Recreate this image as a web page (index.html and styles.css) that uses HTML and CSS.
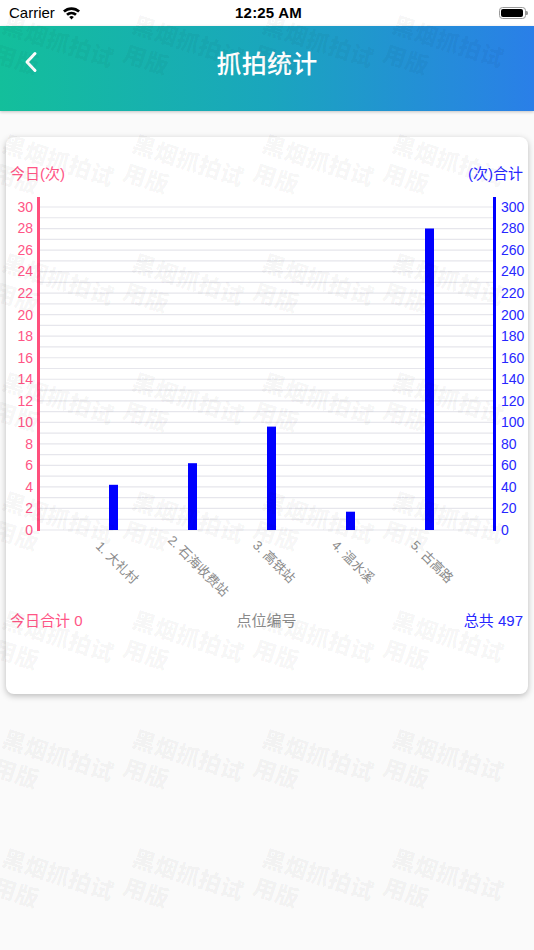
FILE: index.html
```html
<!DOCTYPE html>
<html lang="zh-CN">
<head>
<meta charset="utf-8">
<meta name="viewport" content="width=534">
<title>抓拍统计</title>
<link rel="stylesheet" href="styles.css">
</head>
<body>
<div class="page">
  <div class="statusbar">
    <div class="sb-left">
      <span class="carrier">Carrier</span>
      <svg class="wifi" width="19" height="14" viewBox="0 0 19 14" aria-hidden="true">
        <path d="M1 4.6 A12.5 12.5 0 0 1 18 4.6 L16.2 6.5 A10 10 0 0 0 2.8 6.5 Z" fill="#000"/>
        <path d="M4.1 7.8 A8 8 0 0 1 14.9 7.8 L13.1 9.7 A5.5 5.5 0 0 0 5.9 9.7 Z" fill="#000"/>
        <path d="M7.2 11 A3.4 3.4 0 0 1 11.8 11 L9.5 13.4 Z" fill="#000"/>
      </svg>
    </div>
    <div class="sb-time">12:25 AM</div>
    <div class="sb-right">
      <span class="battery"><span class="battery-level"></span></span>
      <span class="battery-nub"></span>
    </div>
  </div>

  <header class="navbar">
    <button class="back" type="button" aria-label="返回">
      <svg width="16" height="22" viewBox="0 0 16 22" aria-hidden="true">
        <path d="M11 2.5 L3 11 L11 19.5" fill="none" stroke="#fff" stroke-width="3" stroke-linecap="round" stroke-linejoin="round"/>
      </svg>
    </button>
    <h1 class="title">抓拍统计</h1>
    <span class="nav-spacer"></span>
  </header>

  <main class="content">
    <section class="card">
      <div class="axis-titles">
        <span class="axis-title-left">今日(次)</span>
        <span class="axis-title-right">(次)合计</span>
      </div>

      <svg class="chart" width="522" height="420" viewBox="6 184 522 420">
        <path class="grid" d="M40 530H493M40 519.23H493M40 508.47H493M40 497.7H493M40 486.93H493M40 476.17H493M40 465.4H493M40 454.63H493M40 443.87H493M40 433.1H493M40 422.33H493M40 411.57H493M40 400.8H493M40 390.03H493M40 379.27H493M40 368.5H493M40 357.73H493M40 346.97H493M40 336.2H493M40 325.43H493M40 314.67H493M40 303.9H493M40 293.13H493M40 282.37H493M40 271.6H493M40 260.83H493M40 250.07H493M40 239.3H493M40 228.53H493M40 217.77H493M40 207H493"/>
        <line class="axis-left" x1="38.5" y1="197" x2="38.5" y2="531"/>
        <line class="axis-right" x1="494.5" y1="197" x2="494.5" y2="531"/>

        <g class="ylabels-left">
          <text x="33" y="534.8">0</text>
          <text x="33" y="513.3">2</text>
          <text x="33" y="491.7">4</text>
          <text x="33" y="470.2">6</text>
          <text x="33" y="448.7">8</text>
          <text x="33" y="427.1">10</text>
          <text x="33" y="405.6">12</text>
          <text x="33" y="384.1">14</text>
          <text x="33" y="362.5">16</text>
          <text x="33" y="341">18</text>
          <text x="33" y="319.5">20</text>
          <text x="33" y="297.9">22</text>
          <text x="33" y="276.4">24</text>
          <text x="33" y="254.9">26</text>
          <text x="33" y="233.3">28</text>
          <text x="33" y="211.8">30</text>
        </g>
        <g class="ylabels-right">
          <text x="501" y="534.8">0</text>
          <text x="501" y="513.3">20</text>
          <text x="501" y="491.7">40</text>
          <text x="501" y="470.2">60</text>
          <text x="501" y="448.7">80</text>
          <text x="501" y="427.1">100</text>
          <text x="501" y="405.6">120</text>
          <text x="501" y="384.1">140</text>
          <text x="501" y="362.5">160</text>
          <text x="501" y="341">180</text>
          <text x="501" y="319.5">200</text>
          <text x="501" y="297.9">220</text>
          <text x="501" y="276.4">240</text>
          <text x="501" y="254.9">260</text>
          <text x="501" y="233.3">280</text>
          <text x="501" y="211.8">300</text>
        </g>

        <g class="bars">
          <rect x="109" y="484.8" width="9" height="45.2"/>
          <rect x="188" y="463.2" width="9" height="66.8"/>
          <rect x="267" y="426.6" width="9" height="103.4"/>
          <rect x="346" y="511.7" width="9" height="18.3"/>
          <rect x="425" y="228.5" width="9" height="301.5"/>
        </g>

        <g class="xlabels">
          <text x="95" y="547" transform="rotate(45 95 547)">1. 大礼村</text>
          <text x="167" y="541" transform="rotate(45 167 541)">2. 石海收费站</text>
          <text x="252" y="546" transform="rotate(45 252 546)">3. 高铁站</text>
          <text x="331" y="546" transform="rotate(45 331 546)">4. 温水溪</text>
          <text x="410" y="546" transform="rotate(45 410 546)">5. 古高路</text>
        </g>
      </svg>

      <div class="summary">
        <span class="sum-today">今日合计 0</span>
        <span class="sum-axis">点位编号</span>
        <span class="sum-total">总共 497</span>
      </div>
    </section>
  </main>

  <svg class="watermark" width="534" height="950" viewBox="0 0 534 950" aria-hidden="true">
    <g transform="translate(7 13) rotate(18)"><text y="20">黑烟抓拍试</text><text y="50">用版</text></g>
    <g transform="translate(137 13) rotate(18)"><text y="20">黑烟抓拍试</text><text y="50">用版</text></g>
    <g transform="translate(267 13) rotate(18)"><text y="20">黑烟抓拍试</text><text y="50">用版</text></g>
    <g transform="translate(397 13) rotate(18)"><text y="20">黑烟抓拍试</text><text y="50">用版</text></g>

    <g transform="translate(7 132) rotate(18)"><text y="20">黑烟抓拍试</text><text y="50">用版</text></g>
    <g transform="translate(137 132) rotate(18)"><text y="20">黑烟抓拍试</text><text y="50">用版</text></g>
    <g transform="translate(267 132) rotate(18)"><text y="20">黑烟抓拍试</text><text y="50">用版</text></g>
    <g transform="translate(397 132) rotate(18)"><text y="20">黑烟抓拍试</text><text y="50">用版</text></g>

    <g transform="translate(7 251) rotate(18)"><text y="20">黑烟抓拍试</text><text y="50">用版</text></g>
    <g transform="translate(137 251) rotate(18)"><text y="20">黑烟抓拍试</text><text y="50">用版</text></g>
    <g transform="translate(267 251) rotate(18)"><text y="20">黑烟抓拍试</text><text y="50">用版</text></g>
    <g transform="translate(397 251) rotate(18)"><text y="20">黑烟抓拍试</text><text y="50">用版</text></g>

    <g transform="translate(7 370) rotate(18)"><text y="20">黑烟抓拍试</text><text y="50">用版</text></g>
    <g transform="translate(137 370) rotate(18)"><text y="20">黑烟抓拍试</text><text y="50">用版</text></g>
    <g transform="translate(267 370) rotate(18)"><text y="20">黑烟抓拍试</text><text y="50">用版</text></g>
    <g transform="translate(397 370) rotate(18)"><text y="20">黑烟抓拍试</text><text y="50">用版</text></g>

    <g transform="translate(7 489) rotate(18)"><text y="20">黑烟抓拍试</text><text y="50">用版</text></g>
    <g transform="translate(137 489) rotate(18)"><text y="20">黑烟抓拍试</text><text y="50">用版</text></g>
    <g transform="translate(267 489) rotate(18)"><text y="20">黑烟抓拍试</text><text y="50">用版</text></g>
    <g transform="translate(397 489) rotate(18)"><text y="20">黑烟抓拍试</text><text y="50">用版</text></g>

    <g transform="translate(7 608) rotate(18)"><text y="20">黑烟抓拍试</text><text y="50">用版</text></g>
    <g transform="translate(137 608) rotate(18)"><text y="20">黑烟抓拍试</text><text y="50">用版</text></g>
    <g transform="translate(267 608) rotate(18)"><text y="20">黑烟抓拍试</text><text y="50">用版</text></g>
    <g transform="translate(397 608) rotate(18)"><text y="20">黑烟抓拍试</text><text y="50">用版</text></g>

    <g transform="translate(7 727) rotate(18)"><text y="20">黑烟抓拍试</text><text y="50">用版</text></g>
    <g transform="translate(137 727) rotate(18)"><text y="20">黑烟抓拍试</text><text y="50">用版</text></g>
    <g transform="translate(267 727) rotate(18)"><text y="20">黑烟抓拍试</text><text y="50">用版</text></g>
    <g transform="translate(397 727) rotate(18)"><text y="20">黑烟抓拍试</text><text y="50">用版</text></g>

    <g transform="translate(7 846) rotate(18)"><text y="20">黑烟抓拍试</text><text y="50">用版</text></g>
    <g transform="translate(137 846) rotate(18)"><text y="20">黑烟抓拍试</text><text y="50">用版</text></g>
    <g transform="translate(267 846) rotate(18)"><text y="20">黑烟抓拍试</text><text y="50">用版</text></g>
    <g transform="translate(397 846) rotate(18)"><text y="20">黑烟抓拍试</text><text y="50">用版</text></g>
  </svg>
</div>
</body>
</html>
```

FILE: styles.css
```css
* {
  box-sizing: border-box;
}

html, body {
  margin: 0;
  padding: 0;
}

body {
  font-family: "Liberation Sans", "Noto Sans CJK SC", sans-serif;
  background: #fafafa;
}

.page {
  position: relative;
  width: 534px;
  min-height: 950px;
  overflow: hidden;
  background: #fafafa;
}

/* ---------- status bar ---------- */
.statusbar {
  height: 26px;
  background: #fff;
  display: grid;
  grid-template-columns: 1fr auto 1fr;
  align-items: center;
  padding: 0 6px 0 9px;
  color: #000;
}

.sb-left {
  display: flex;
  align-items: center;
  gap: 7px;
}

.carrier {
  font-size: 15px;
  line-height: 18px;
}

.wifi {
  display: block;
  margin-top: -1px;
}

.sb-time {
  font-size: 15px;
  font-weight: 700;
  line-height: 18px;
  letter-spacing: 0.2px;
}

.sb-right {
  display: flex;
  align-items: center;
  justify-content: flex-end;
}

.battery {
  width: 27px;
  height: 12.5px;
  border: 1.2px solid #9a9a9a;
  border-radius: 3.5px;
  padding: 1.3px;
  display: flex;
}

.battery-level {
  flex: 1;
  background: #000;
  border-radius: 2px;
}

.battery-nub {
  width: 2px;
  height: 4.5px;
  background: #9a9a9a;
  border-radius: 0 1.5px 1.5px 0;
  margin-left: 0.5px;
}

/* ---------- nav bar ---------- */
.navbar {
  height: 85px;
  background: linear-gradient(90deg, #13bf9b 0%, #1aa6bd 50%, #2a7fe8 100%);
  display: grid;
  grid-template-columns: 70px 1fr 70px;
  align-items: center;
  padding-bottom: 14px;
  box-shadow: 0 1px 3px rgba(0, 0, 0, 0.22);
  position: relative;
}

.back {
  background: none;
  border: 0;
  padding: 0 0 0 24px;
  margin: 0;
  display: flex;
  align-items: center;
  cursor: pointer;
}

.back svg {
  display: block;
}

.title {
  margin: 0;
  text-align: center;
  color: #fff;
  font-family: "Noto Sans CJK SC", sans-serif;
  font-size: 25px;
  font-weight: 500;
  line-height: 30px;
  letter-spacing: 0.3px;
}

/* ---------- card ---------- */
.content {
  padding: 26px 6px 0;
}

.card {
  background: #fff;
  border-radius: 8px;
  box-shadow: 0 2px 6px rgba(0, 0, 0, 0.25);
  padding: 27px 5px 63px 4px;
}

.axis-titles {
  display: flex;
  justify-content: space-between;
  height: 20px;
  line-height: 20px;
  font-size: 15px;
}

.axis-title-left {
  color: #ff5586;
}

.axis-title-right {
  color: #2727ff;
}

.chart {
  display: block;
  margin: 0 -5px 0 -4px;
  overflow: visible;
}

.grid {
  stroke: #e6e6ec;
  stroke-width: 1.2;
  fill: none;
}

.axis-left {
  stroke: #ff4f7d;
  stroke-width: 3;
}

.axis-right {
  stroke: #0000ff;
  stroke-width: 3;
}

.ylabels-left text,
.ylabels-right text {
  font-family: "Liberation Sans", sans-serif;
  font-size: 14px;
}

.ylabels-left text {
  fill: #ff5586;
  text-anchor: end;
}

.ylabels-right text {
  fill: #2727ff;
  text-anchor: start;
}

.bars rect {
  fill: #0000ff;
}

.xlabels text {
  font-family: "Liberation Sans", "Noto Sans CJK SC", sans-serif;
  font-size: 13px;
  fill: #8a8a8a;
}

.summary {
  margin-top: 7px;
  height: 20px;
  line-height: 20px;
  font-size: 15px;
  display: grid;
  grid-template-columns: 1fr auto 1fr;
}

.sum-today {
  color: #ff5586;
}

.sum-axis {
  color: #8a8a8a;
}

.sum-total {
  color: #2727ff;
  text-align: right;
}

/* ---------- watermark overlay ---------- */
.watermark {
  position: absolute;
  top: 0;
  left: 0;
  pointer-events: none;
}

.watermark text {
  font-family: "Noto Sans CJK SC", sans-serif;
  font-size: 23px;
  font-weight: 900;
  fill: #000;
  fill-opacity: 0.04;
}
```
